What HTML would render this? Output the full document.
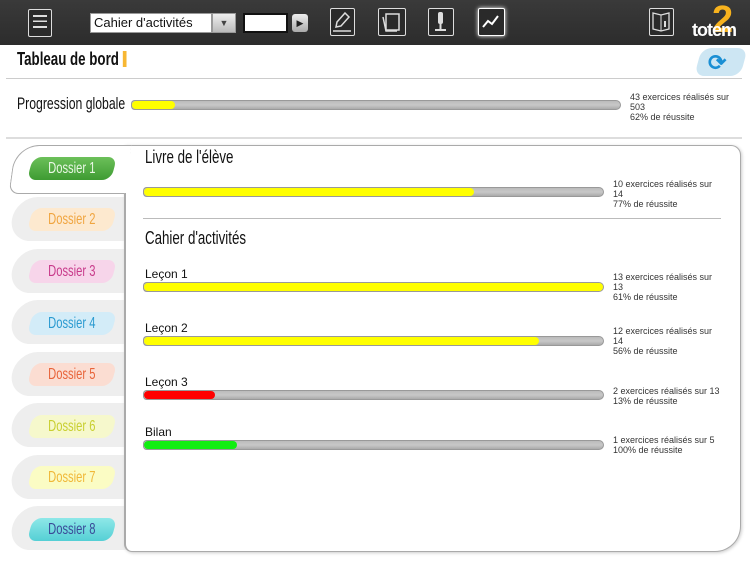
<!DOCTYPE html><html><head><meta charset="utf-8"><style>
*{margin:0;padding:0;box-sizing:border-box}
body{width:750px;height:563px;background:#fff;position:relative;overflow:hidden;font-family:"Liberation Sans",sans-serif}
.a{position:absolute}
.top{left:0;top:0;width:750px;height:45px;background:linear-gradient(#3a3a3a,#2c2c2c)}
.ic{position:absolute;top:8px;width:28px;height:28px;border:1.5px solid #ddd;border-radius:2px;background:#2a2a2a}
.cond{transform:scaleX(0.74);transform-origin:left center;white-space:nowrap}
.bar{position:absolute;height:10px;border-radius:5px 7px 7px 5px;background:linear-gradient(#bbb,#c8c8c8 50%,#aaa);border:1px solid #999}
.fill{position:absolute;left:0;top:0;bottom:0;border-radius:5px}
.t{position:absolute;font-size:9px;line-height:10px;color:#333}
.lbl{position:absolute;font-size:12px;color:#111}
.tabbg{position:absolute;left:12px;width:120px;height:44px;background:#eee;border-radius:22px 0 0 22px;transform:skewX(-10deg)}
.pill{position:absolute;left:30px;width:84px;height:23px;border-radius:9px;transform:skewX(-15deg)}
.pl{position:absolute;left:30px;width:84px;text-align:center;font-size:16px;line-height:23px}
.pl span{display:inline-block;transform:scaleX(0.7)}
</style></head><body>
<div class="a top"></div>
<div class="ic" style="left:28px;width:24px;top:9px"><div style="margin:5px 4px;height:13px;border-top:2px solid #ddd;border-bottom:2px solid #ddd;background:linear-gradient(transparent 40%,#ddd 40%,#ddd 55%,transparent 55%)"></div></div>
<div class="a" style="left:90px;top:13px;width:122px;height:20px;background:#fff;border:1px solid #999;font-size:13px;line-height:18px;padding-left:3px;color:#111">Cahier d'activités</div>
<div class="a" style="left:212px;top:13px;width:24px;height:20px;background:linear-gradient(#eee,#bbb);border:1px solid #999;font-size:9px;text-align:center;line-height:18px;color:#444">▼</div>
<div class="a" style="left:243px;top:13px;width:45px;height:20px;background:#fff;border:2px solid #111"></div>
<div class="a" style="left:292px;top:14px;width:16px;height:18px;background:linear-gradient(#eee,#aaa);border-radius:3px;font-size:9px;text-align:center;line-height:18px;color:#222">▶</div>
<div class="ic" style="left:330px;width:25px"><svg width="22" height="25"><path d="M14 4l4 4-8 9-5 1 1-5z" fill="none" stroke="#ddd" stroke-width="1.5"/><line x1="2" y1="22" x2="20" y2="22" stroke="#ddd" stroke-width="1.5"/></svg></div>
<div class="ic" style="left:378px;width:28px"><svg width="25" height="25"><rect x="7" y="5" width="13" height="16" fill="none" stroke="#ddd" stroke-width="1.5"/><path d="M4 8l3 14h11" fill="none" stroke="#ddd" stroke-width="1.5"/></svg></div>
<div class="ic" style="left:428px;width:26px"><svg width="23" height="25"><rect x="9" y="3" width="5" height="12" rx="2" fill="#ddd"/><line x1="11.5" y1="15" x2="11.5" y2="20" stroke="#ddd" stroke-width="2"/><rect x="6" y="20" width="11" height="2" fill="#ddd"/></svg></div>
<div class="ic" style="left:478px;width:27px;border-color:#fff;box-shadow:0 0 4px #fff"><svg width="24" height="25"><path d="M4 18l5-6 4 3 6-8" fill="none" stroke="#fff" stroke-width="2"/></svg></div>
<div class="ic" style="left:649px;width:25px"><svg width="22" height="25"><path d="M3 4l8 2 8-2v16l-8 2-8-2z" fill="none" stroke="#ddd" stroke-width="1.3"/><line x1="11" y1="6" x2="11" y2="22" stroke="#ddd"/><rect x="14" y="12" width="2" height="6" fill="#ddd"/></svg></div>
<div class="a" style="left:712px;top:0;font-size:38px;font-weight:bold;color:#f7b21d;line-height:40px">2</div>
<div class="a" style="left:692px;top:20px;font-size:18px;font-weight:bold;color:#fff;letter-spacing:-1px">totem</div>

<div class="a cond" style="left:17px;top:49px;font-size:18px;font-weight:bold;color:#111">Tableau de bord <span style="display:inline-block;width:5px;height:16px;background:#f7b733;vertical-align:-2px"></span></div>
<div class="a" style="left:698px;top:48px;width:46px;height:28px;background:#cde6f3;border-radius:10px;transform:skewX(-15deg)"></div>
<div class="a" style="left:708px;top:50px;font-size:22px;color:#1a8fd4;font-weight:bold">⟳</div>
<div class="a" style="left:6px;top:78px;width:736px;height:1px;background:#ccc"></div>
<div class="a cond" style="left:17px;top:94px;font-size:17px;color:#111;transform:scaleX(0.72)">Progression globale</div>
<div class="bar" style="left:131px;top:100px;width:490px"><div class="fill" style="width:43px;background:#ff0"></div></div>
<div class="t" style="left:630px;top:92px">43 exercices réalisés sur<br>503<br>62% de réussite</div>
<div class="a" style="left:6px;top:137px;width:736px;height:2px;background:#ddd"></div>

<div class="tabbg" style="top:197px"></div><div class="tabbg" style="top:249px"></div><div class="tabbg" style="top:300px"></div><div class="tabbg" style="top:352px"></div><div class="tabbg" style="top:403px"></div><div class="tabbg" style="top:455px"></div><div class="tabbg" style="top:506px"></div>
<div class="a" style="left:124px;top:145px;width:617px;height:407px;border:1.5px solid #aaa;border-left-width:2px;border-radius:0 10px 26px 8px;background:#fff;box-shadow:1px 1px 3px #ccc"></div>
<div class="a" style="left:12px;top:145px;width:116px;height:49px;background:#fff;border:1.5px solid #aaa;border-right:none;border-radius:24px 0 0 10px;transform:skewX(-8deg)"></div>
<div class="a" style="left:118px;top:146px;width:12px;height:47px;background:#fff"></div>

<div class="pill" style="top:157px;background:linear-gradient(#6cc05a,#3e9b32)"></div><div class="pl" style="top:157px;color:#eaf7e5"><span>Dossier 1</span></div>
<div class="pill" style="top:208px;background:#fde9cf"></div><div class="pl" style="top:208px;color:#f0a540"><span>Dossier 2</span></div>
<div class="pill" style="top:260px;background:#f7d5ea"></div><div class="pl" style="top:260px;color:#c83a8a"><span>Dossier 3</span></div>
<div class="pill" style="top:312px;background:#d3ecf8"></div><div class="pl" style="top:312px;color:#2a9ad0"><span>Dossier 4</span></div>
<div class="pill" style="top:363px;background:#fbddd2"></div><div class="pl" style="top:363px;color:#e8643a"><span>Dossier 5</span></div>
<div class="pill" style="top:415px;background:#f6f8cc"></div><div class="pl" style="top:415px;color:#c8cf30"><span>Dossier 6</span></div>
<div class="pill" style="top:466px;background:#fbfcc4"></div><div class="pl" style="top:466px;color:#f0b838"><span>Dossier 7</span></div>
<div class="pill" style="top:518px;background:linear-gradient(#8ee8e8,#55cfd5)"></div><div class="pl" style="top:518px;color:#3a4a98"><span>Dossier 8</span></div>

<div class="a cond" style="left:145px;top:147px;font-size:18px;color:#111">Livre de l'élève</div>
<div class="bar" style="left:143px;top:187px;width:461px"><div class="fill" style="width:330px;background:#ff0"></div></div>
<div class="t" style="left:613px;top:179px">10 exercices réalisés sur<br>14<br>77% de réussite</div>
<div class="a" style="left:143px;top:218px;width:578px;height:1px;background:#bbb"></div>
<div class="a cond" style="left:145px;top:228px;font-size:18px;color:#111">Cahier d'activités</div>

<div class="lbl" style="left:145px;top:267px">Leçon 1</div>
<div class="bar" style="left:143px;top:282px;width:461px"><div class="fill" style="width:459px;background:#ff0"></div></div>
<div class="t" style="left:613px;top:272px">13 exercices réalisés sur<br>13<br>61% de réussite</div>
<div class="lbl" style="left:145px;top:321px">Leçon 2</div>
<div class="bar" style="left:143px;top:336px;width:461px"><div class="fill" style="width:395px;background:#ff0"></div></div>
<div class="t" style="left:613px;top:326px">12 exercices réalisés sur<br>14<br>56% de réussite</div>
<div class="lbl" style="left:145px;top:375px">Leçon 3</div>
<div class="bar" style="left:143px;top:390px;width:461px"><div class="fill" style="width:71px;background:#f00"></div></div>
<div class="t" style="left:613px;top:386px">2 exercices réalisés sur 13<br>13% de réussite</div>
<div class="lbl" style="left:145px;top:425px">Bilan</div>
<div class="bar" style="left:143px;top:440px;width:461px"><div class="fill" style="width:93px;background:#1e1"></div></div>
<div class="t" style="left:613px;top:435px">1 exercices réalisés sur 5<br>100% de réussite</div>
</body></html>
